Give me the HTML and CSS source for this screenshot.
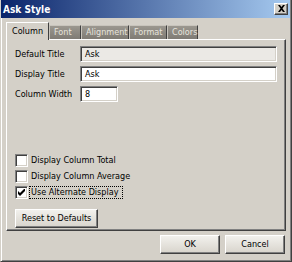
FILE: index.html
```html
<!DOCTYPE html>
<html>
<head>
<meta charset="utf-8">
<link rel="stylesheet" href="styles.css">
</head>
<body>
<div class="win">
  <div class="titlebar">
    <span class="title">Ask Style</span>
    <span class="close"><svg width="9" height="8" viewBox="0 0 9 8"><path d="M1 0h2l1.5 2 1.5-2h2l-2.5 3.5 2.5 3.5h-2l-1.5-2-1.5 2h-2l2.5-3.5z" fill="#000"/></svg></span>
  </div>
  <div class="content">
    <div class="tabs">
      <div class="tab active">Column</div>
      <div class="tab t-font">Font</div>
      <div class="tab t-align">Alignment</div>
      <div class="tab t-format">Format</div>
      <div class="tab t-colors">Colors</div>
    </div>
    <div class="panel">
      <div class="row"><span class="lbl">Default Title</span><div class="field wide light">Ask</div></div>
      <div class="row"><span class="lbl">Display Title</span><div class="field wide">Ask</div></div>
      <div class="row"><span class="lbl">Column Width</span><div class="field narrow">8</div></div>
      <div class="checks">
        <div class="chk"><span class="box"></span><span class="ctext">Display Column Total</span></div>
        <div class="chk"><span class="box"></span><span class="ctext">Display Column Average</span></div>
        <div class="chk"><span class="box"><svg width="7" height="7" viewBox="0 0 7 7"><path d="M0 2v3l2 2 5-5V-1L2 4z" fill="#000"/></svg></span><span class="ctext focus">Use Alternate Display</span></div>
      </div>
      <div class="btn reset">Reset to Defaults</div>
    </div>
    <div class="footer">
      <div class="btn ok">OK</div>
      <div class="btn cancel">Cancel</div>
    </div>
  </div>
</div>
</body>
</html>
```

FILE: styles.css
```css
html, body { margin: 0; padding: 0; }
body {
  width: 292px; height: 262px; overflow: hidden;
  font-family: "DejaVu Sans Condensed", "Liberation Sans Narrow", "Liberation Sans", sans-serif;
  font-size: 9px; color: #000;
  background: #d4d0c8;
  white-space: nowrap;
}
.win {
  width: 292px; height: 262px; box-sizing: border-box;
  background: #d4d0c8;
  border-left: 1px solid #d4d0c8;
  border-right: 1px solid #404040;
  border-bottom: 1px solid #404040;
  box-shadow: inset 1px 0 0 #fff, inset -1px -1px 0 #808080;
  display: flex; flex-direction: column;
}
.titlebar {
  height: 18px; margin: 0 1px 0 0;
  background: linear-gradient(to right, #0a246a, #a6caf0);
  display: flex; align-items: center; justify-content: space-between;
  padding: 0 2px 0 2px;
}
.title { color: #fff; font-weight: bold; font-size: 10px; }
.close {
  width: 12px; height: 10px; background: #d4d0c8;
  border: 1px solid; border-color: #fff #404040 #404040 #fff;
  box-shadow: inset -1px -1px 0 #808080;
  display: flex; align-items: center; justify-content: center;
  margin-top: -1px;
}
.content { padding: 4px 5px 0 5px; display: flex; flex-direction: column; }
.tabs { display: flex; height: 17px; align-items: flex-end; position: relative; z-index: 1; }
.tab {
  height: 14px; line-height: 13px; padding: 0 4px;
  box-sizing: border-box;
  background: linear-gradient(#9b978f, #7f7b74);
  color: #e6e3dc;
  border-top: 1px solid #c8c4bc; border-left: 1px solid #c8c4bc;
  border-right: 1px solid #404040;
}
.tab.active {
  height: 18px; line-height: 16px; margin-bottom: -1px;
  background: #d4d0c8; color: #000;
  border-top: 1px solid #fff; border-left: 1px solid #fff;
  border-right: 1px solid #404040;
  width: 43px; padding: 0 0 0 5px;
}
.t-font { width: 32px; }
.t-align { width: 48px; }
.t-format { width: 38px; }
.t-colors { width: 31px; }
.panel {
  height: 192px; box-sizing: border-box;
  border-top: 1px solid #fff; border-left: 1px solid #fff;
  border-right: 1px solid #404040; border-bottom: 1px solid #404040;
  box-shadow: inset -1px -1px 0 #808080;
  width: 280px;
  padding: 6px 0 0 8px;
  display: flex; flex-direction: column;
}
.row { display: flex; align-items: center; height: 16px; margin-bottom: 4px; }
.lbl { width: 65px; }
.field {
  height: 16px; box-sizing: border-box; background: #fff;
  border: 1px solid; border-color: #808080 #fff #fff #808080;
  box-shadow: inset 1px 1px 0 #404040, inset -1px -1px 0 #d4d0c8;
  padding: 0 4px; line-height: 14px;
}
.field.wide { width: 197px; }
.field.narrow { width: 38px; }
.field.light { background: #ebe9e5; }
.checks { margin-top: 46px; display: flex; flex-direction: column; }
.chk { display: flex; align-items: center; height: 16px; }
.box {
  width: 13px; height: 13px; box-sizing: border-box; background: #fff;
  border: 1px solid; border-color: #808080 #fff #fff #808080;
  box-shadow: inset 1px 1px 0 #404040, inset -1px -1px 0 #d4d0c8;
  display: flex; align-items: center; justify-content: center;
  margin-right: 1px;
}
.ctext { padding: 0 1px; line-height: 11px; border: 1px solid transparent; }
.ctext.focus { border: 1px dotted #000; width: 94px; box-sizing: border-box; }
.btn {
  box-sizing: border-box; height: 19px; line-height: 16px; text-align: center;
  background: linear-gradient(#f2f1ed, #d8d4cc);
  border: 1px solid; border-color: #fff #404040 #404040 #fff;
  box-shadow: inset -1px -1px 0 #808080;
}
.reset { width: 83px; margin-top: 9px; margin-left: 0; }
.footer { display: flex; justify-content: flex-end; gap: 5px; padding-top: 4px; width: 279px; }
.ok, .cancel { width: 60px; }
```
